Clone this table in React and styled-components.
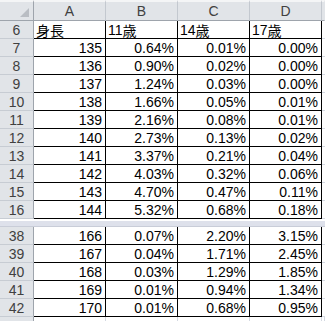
import styled, { createGlobalStyle } from 'styled-components';

const GlobalStyle = createGlobalStyle`
  html, body {
    margin: 0;
    padding: 0;
    background: #ffffff;
  }
  body {
    font-family: "Liberation Sans", "Noto Sans CJK JP", sans-serif;
  }
`;

const Sheet = styled.div`
  display: grid;
  grid-template-columns: 34px repeat(4, 72px) 1fr;
  grid-template-rows: 21px repeat(11, 18px) 8px repeat(5, 18px) 1fr;
  width: 325px;
  height: 321px;
  overflow: hidden;
  font-size: 14px;
  color: #000;
`;

const Corner = styled.div`
  position: relative;
  background: #e1e4e8;
  border-top: 2px solid #f4f5f6;
  border-right: 1px solid #9ea4ac;
  border-bottom: 1px solid #9ea4ac;

  &::after {
    content: '';
    position: absolute;
    right: 4px;
    bottom: 3px;
    width: 0;
    height: 0;
    border-left: 9px solid transparent;
    border-bottom: 9px solid #b9bdc3;
  }
`;

const ColHead = styled.div`
  display: flex;
  align-items: center;
  justify-content: center;
  background: #e1e4e8;
  border-top: 2px solid #f4f5f6;
  border-right: 1px solid ${(p) => (p.$last ? '#e1e4e8' : '#c3c8cf')};
  border-bottom: 1px solid #9ea4ac;
  color: #404040;
  line-height: 16px;
`;

const RowHead = styled.div`
  display: flex;
  align-items: flex-end;
  justify-content: center;
  background: #e1e4e8;
  border-right: 1px solid #9ea4ac;
  border-bottom: 1px solid #c7ccd3;
  color: #404040;
  line-height: 16px;
`;

const Cell = styled.div`
  display: flex;
  align-items: flex-end;
  justify-content: ${(p) => (p.$text ? 'flex-start' : 'flex-end')};
  padding: 0 ${(p) => (p.$text ? '0' : '3px')} 0 ${(p) => (p.$text ? '2px' : '0')};
  border-right: 1px solid #000;
  border-bottom: 1px solid #000;
  line-height: 16px;
  white-space: nowrap;
  overflow: hidden;
`;

const Kanji = styled.span`
  font-family: "Noto Sans CJK JP", sans-serif;
  font-size: 14px;
  line-height: 15px;
`;

const Spare = styled.div`
  border-bottom: 1px solid #d4d9e2;
`;

const GridCell = styled.div`
  border-right: 1px solid #d4d9e2;
  ${(p) => p.$head && 'background: #e1e4e8; border-right: 1px solid #9ea4ac;'}
`;

const SplitBar = styled.div`
  grid-column: 1 / -1;
  border-top: 2px solid #ffffff;
  background: #dee1eb;
  border-bottom: 1px solid #c9cdd8;
`;

const upper = [
  [135, '0.64%', '0.01%', '0.00%'],
  [136, '0.90%', '0.02%', '0.00%'],
  [137, '1.24%', '0.03%', '0.00%'],
  [138, '1.66%', '0.05%', '0.01%'],
  [139, '2.16%', '0.08%', '0.01%'],
  [140, '2.73%', '0.13%', '0.02%'],
  [141, '3.37%', '0.21%', '0.04%'],
  [142, '4.03%', '0.32%', '0.06%'],
  [143, '4.70%', '0.47%', '0.11%'],
  [144, '5.32%', '0.68%', '0.18%'],
];

const lower = [
  [166, '0.07%', '2.20%', '3.15%'],
  [167, '0.04%', '1.71%', '2.45%'],
  [168, '0.03%', '1.29%', '1.85%'],
  [169, '0.01%', '0.94%', '1.34%'],
  [170, '0.01%', '0.68%', '0.95%'],
];

const labels = [
  ['', '身長'],
  ['11', '歳'],
  ['14', '歳'],
  ['17', '歳'],
];

const DataRow = ({ num, values }) => (
  <>
    <RowHead>{num}</RowHead>
    {values.map((v, i) => (
      <Cell key={i}>{v}</Cell>
    ))}
    <Spare />
  </>
);

export default function App() {
  return (
    <>
      <GlobalStyle />
      <Sheet>
        <Corner />
        {['A', 'B', 'C', 'D'].map((c) => (
          <ColHead key={c}>{c}</ColHead>
        ))}
        <ColHead $last />

        <RowHead>6</RowHead>
        {labels.map(([n, k]) => (
          <Cell key={n + k} $text>
            {n}
            <Kanji>{k}</Kanji>
          </Cell>
        ))}
        <Spare />

        {upper.map((r, i) => (
          <DataRow key={r[0]} num={7 + i} values={r} />
        ))}

        <SplitBar />

        {lower.map((r, i) => (
          <DataRow key={r[0]} num={38 + i} values={r} />
        ))}

        <GridCell $head />
        <GridCell />
        <GridCell />
        <GridCell />
        <GridCell />
        <GridCell />
      </Sheet>
    </>
  );
}
